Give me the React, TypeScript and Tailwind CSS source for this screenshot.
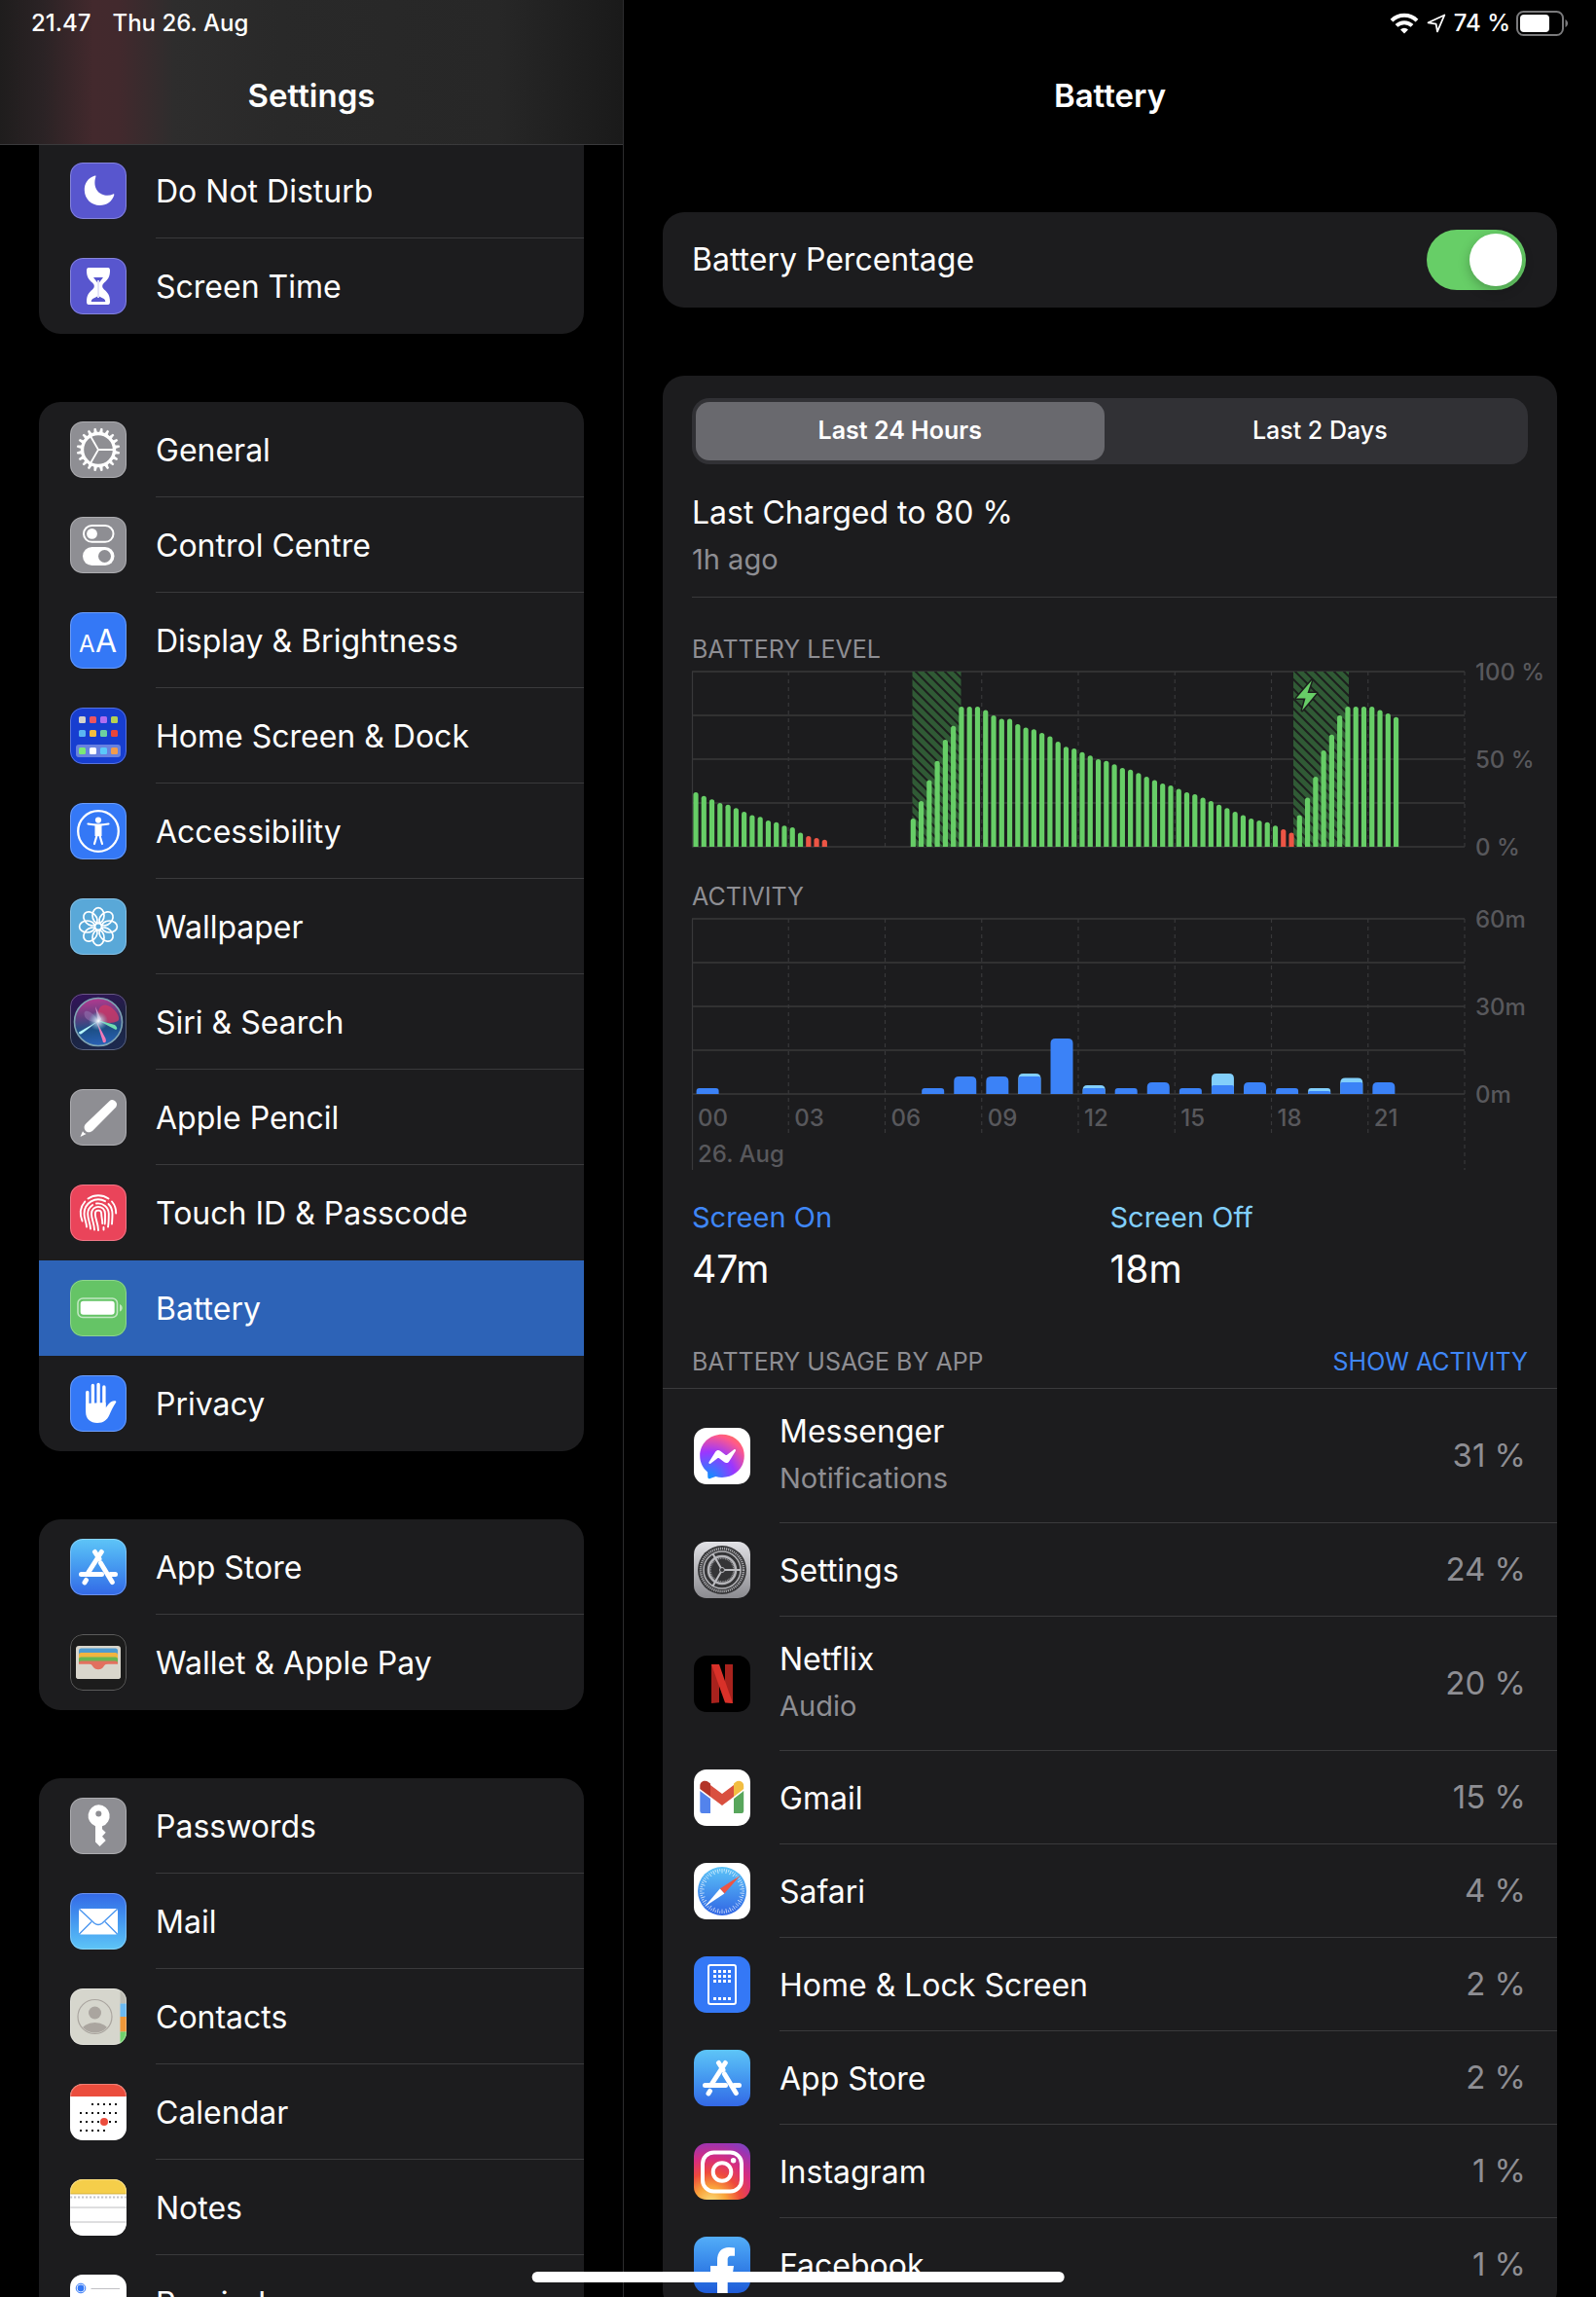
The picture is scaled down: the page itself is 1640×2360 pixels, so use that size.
import { useState, type ReactNode } from "react";

type IconName =
  | "moon"
  | "hourglass"
  | "gear"
  | "toggles"
  | "display"
  | "home"
  | "accessibility"
  | "wallpaper"
  | "siri"
  | "pencil"
  | "touch"
  | "battery"
  | "hand"
  | "appstore"
  | "wallet"
  | "key"
  | "mail"
  | "contacts"
  | "calendar"
  | "notes"
  | "reminders"
  | "messenger"
  | "settings"
  | "netflix"
  | "gmail"
  | "safari"
  | "lockscreen"
  | "instagram"
  | "facebook";

type NavItem = { label: string; icon: IconName };

const navGroups: NavItem[][] = [
  [
    { label: "Do Not Disturb", icon: "moon" },
    { label: "Screen Time", icon: "hourglass" },
  ],
  [
    { label: "General", icon: "gear" },
    { label: "Control Centre", icon: "toggles" },
    { label: "Display & Brightness", icon: "display" },
    { label: "Home Screen & Dock", icon: "home" },
    { label: "Accessibility", icon: "accessibility" },
    { label: "Wallpaper", icon: "wallpaper" },
    { label: "Siri & Search", icon: "siri" },
    { label: "Apple Pencil", icon: "pencil" },
    { label: "Touch ID & Passcode", icon: "touch" },
    { label: "Battery", icon: "battery" },
    { label: "Privacy", icon: "hand" },
  ],
  [
    { label: "App Store", icon: "appstore" },
    { label: "Wallet & Apple Pay", icon: "wallet" },
  ],
  [
    { label: "Passwords", icon: "key" },
    { label: "Mail", icon: "mail" },
    { label: "Contacts", icon: "contacts" },
    { label: "Calendar", icon: "calendar" },
    { label: "Notes", icon: "notes" },
    { label: "Reminders", icon: "reminders" },
  ],
];

const usage: { name: string; icon: IconName; percent: number; detail?: string }[] = [
  { name: "Messenger", icon: "messenger", percent: 31, detail: "Notifications" },
  { name: "Settings", icon: "settings", percent: 24 },
  { name: "Netflix", icon: "netflix", percent: 20, detail: "Audio" },
  { name: "Gmail", icon: "gmail", percent: 15 },
  { name: "Safari", icon: "safari", percent: 4 },
  { name: "Home & Lock Screen", icon: "lockscreen", percent: 2 },
  { name: "App Store", icon: "appstore", percent: 2 },
  { name: "Instagram", icon: "instagram", percent: 1 },
  { name: "Facebook", icon: "facebook", percent: 1 },
];

// one reading every 15 minutes, starting at midnight
const levels = [
  31, 29, 27, 25, 24, 22, 20, 18, 17, 15, 14, 12, 11, 8, 6, 5, 4, 0, 0, 0, 0, 0, 0, 0, 0, 0, 0,
  16, 26, 38, 49, 61, 69, 80, 80, 80, 78, 75, 73, 73, 70, 68, 67, 65, 63, 60, 57, 56, 54, 52, 50, 49, 47, 45,
  44, 42, 40, 38, 36, 35, 33, 31, 30, 28, 26, 24, 22, 20, 18, 16, 15, 14, 12, 10, 8,
  18, 28, 40, 55, 64, 75, 80, 80, 80, 80, 78, 76, 74,
];
const lowReadings = [14, 15, 16, 73, 74];

// minutes per hour: [hour, screen on, screen off]
const activity = [
  [0, 2, 0],
  [7, 2, 0],
  [8, 6, 0],
  [9, 6, 0],
  [10, 6, 1],
  [11, 19, 0],
  [12, 2, 1],
  [13, 2, 0],
  [14, 4, 0],
  [15, 2, 0],
  [16, 3, 4],
  [17, 4, 0],
  [18, 2, 0],
  [19, 1, 1],
  [20, 4, 1.5],
  [21, 4, 0],
];

const CHART_W = 794;
const STEP = CHART_W / 8;

export default function App() {
  const [selected, setSelected] = useState("Battery");

  return (
    <div className="relative flex h-screen overflow-hidden bg-black font-['Inter',sans-serif] text-white">
      <Sidebar selected={selected} onSelect={setSelected} />
      <BatteryPage />
      <div className="absolute bottom-[15px] left-1/2 h-[11px] w-1/3 -translate-x-1/2 rounded-full bg-white" />
    </div>
  );
}

function Sidebar({ selected, onSelect }: { selected: string; onSelect: (label: string) => void }) {
  return (
    <aside className="flex w-[641px] shrink-0 flex-col border-r border-[#2c2c2e]">
      <header className="relative z-10 h-[149px] shrink-0 border-b border-[#3a3a3c] bg-[linear-gradient(90deg,#1f1d1d_0%,#2b2325_7%,#43292d_15%,#42292d_19%,#2e2d2d_28%,#292929_45%,#272727_80%,#1a1a1a_100%)]">
        <div className="flex h-12 items-center gap-[22px] px-8 text-[24px] font-medium">
          <span>21.47</span>
          <span>Thu 26. Aug</span>
        </div>
        <h1 className="flex h-[101px] items-center justify-center text-[33px] font-semibold">Settings</h1>
      </header>
      <nav className="-mt-0.5 flex min-h-0 flex-1 flex-col gap-[70px] overflow-hidden px-10">
        {navGroups.map((group, index) => (
          <NavGroup key={group[0].label} items={group} first={index === 0} selected={selected} onSelect={onSelect} />
        ))}
      </nav>
    </aside>
  );
}

function NavGroup({ items, first, selected, onSelect }: { items: NavItem[]; first: boolean; selected: string; onSelect: (label: string) => void }) {
  return (
    <ul className={first ? "shrink-0 overflow-hidden rounded-b-[22px] bg-[#1c1c1e]" : "shrink-0 overflow-hidden rounded-[22px] bg-[#1c1c1e]"}>
      {items.map((item, index) => {
        const active = item.label === selected;
        const nextActive = items[index + 1]?.label === selected;
        const plain = active || nextActive || index === items.length - 1;
        return (
          <li key={item.label}>
            <a
              href="#"
              aria-current={active ? "page" : undefined}
              onClick={(event) => {
                event.preventDefault();
                onSelect(item.label);
              }}
              className={active ? "flex h-[98px] items-center gap-[30px] bg-[#2d63b7] pl-8" : "flex h-[98px] items-center gap-[30px] pl-8"}
            >
              <AppIcon name={item.icon} outlined />
              <span className={plain ? "flex h-full flex-1 items-center border-b border-transparent pt-0.5 text-[32px]" : "flex h-full flex-1 items-center border-b border-[#3a3a3c] pt-0.5 text-[32px]"}>
                {item.label}
              </span>
            </a>
          </li>
        );
      })}
    </ul>
  );
}

function BatteryPage() {
  const [range, setRange] = useState("Last 24 Hours");

  return (
    <main className="flex min-w-0 flex-1 flex-col overflow-hidden">
      <header className="h-[148px] shrink-0">
        <StatusIcons />
        <h2 className="flex h-[101px] items-center justify-center text-[33px] font-semibold">Battery</h2>
      </header>
      <div className="flex min-h-0 flex-1 flex-col gap-[70px] px-10 pt-[70px]">
        <label className="flex h-[98px] shrink-0 items-center justify-between rounded-[22px] bg-[#1c1c1e] pr-8 pl-[30px] text-[32px]">
          Battery Percentage
          <input
            type="checkbox"
            defaultChecked
            className="flex h-[62px] w-[102px] appearance-none rounded-full bg-[#39393d] p-1 before:block before:size-[54px] before:rounded-full before:bg-white before:shadow-[0_4px_12px_rgba(0,0,0,0.25)] checked:bg-[#67ce67] checked:before:ml-auto"
          />
        </label>

        <section className="shrink-0 rounded-[22px] bg-[#1c1c1e] pt-[23px]">
          <div className="mx-[30px] flex h-[68px] gap-3 rounded-[18px] bg-[#313135] p-1">
            {["Last 24 Hours", "Last 2 Days"].map((option) => (
              <button
                key={option}
                type="button"
                aria-pressed={option === range}
                onClick={() => setRange(option)}
                className={option === range ? "flex-1 rounded-[14px] bg-[#69696e] text-[25px] font-semibold" : "flex-1 rounded-[14px] text-[25px] font-medium"}
              >
                {option}
              </button>
            ))}
          </div>

          <div className="mt-[30px] ml-[30px] border-b border-[#3a3a3c] pb-5">
            <p className="text-[32px] leading-10">Last Charged to 80 %</p>
            <p className="mt-2.5 text-[29px] leading-9 text-[#8e8e93]">1h ago</p>
          </div>

          <div className="mt-[37px] pl-[30px]">
            <h3 className="mb-[7px] text-[25px] leading-8 text-[#8e8e93]">BATTERY LEVEL</h3>
            <LevelChart />
            <h3 className="mt-[35px] mb-[7px] text-[25px] leading-8 text-[#8e8e93]">ACTIVITY</h3>
            <ActivityChart />
          </div>

          <dl className="mt-[29px] grid grid-cols-2 px-[30px]">
            <div>
              <dt className="text-[29px] leading-9 text-[#3f87f8]">Screen On</dt>
              <dd className="mt-[13px] text-[39px] leading-11">47m</dd>
            </div>
            <div>
              <dt className="text-[29px] leading-9 text-[#82cffb]">Screen Off</dt>
              <dd className="mt-[13px] text-[39px] leading-11">18m</dd>
            </div>
          </dl>

          <div className="mt-[57px] flex items-center justify-between border-b border-[#3a3a3c] px-[30px] pb-[11px] text-[25px] leading-8">
            <h3 className="text-[#8e8e93]">BATTERY USAGE BY APP</h3>
            <button type="button" className="text-[#3f87f8]">SHOW ACTIVITY</button>
          </div>
          <ul>
            {usage.map((app) => (
              <li key={app.name} className="flex items-center gap-[30px] pl-8">
                <AppIcon name={app.icon} />
                <div className={app.detail ? "flex h-[138px] flex-1 items-center justify-between border-b border-[#3a3a3c] pr-8" : "flex h-24 flex-1 items-center justify-between border-b border-[#3a3a3c] pr-8"}>
                  <div className="pt-0.5">
                    <p className="text-[32px] leading-12">{app.name}</p>
                    {app.detail && <p className="pb-1 text-[29px] leading-12 text-[#8e8e93]">{app.detail}</p>}
                  </div>
                  <span className="text-[33px] text-[#8e8e93]">{app.percent} %</span>
                </div>
              </li>
            ))}
          </ul>
        </section>
      </div>
    </main>
  );
}

function StatusIcons() {
  return (
    <div className="flex h-12 items-center justify-end pr-7 text-[24px] font-medium">
      <svg width="30" height="22" viewBox="0 0 30 22" className="mr-2">
        <g fill="none" stroke="#fff" strokeWidth="4">
          <path d="M2 8.2a18.5 18.5 0 0 1 26 0" />
          <path d="M7 13.4a11.5 11.5 0 0 1 16 0" />
        </g>
        <path d="M15 21.5l-4-4.1a5.8 5.8 0 0 1 8 0z" fill="#fff" />
      </svg>
      <svg width="20" height="20" viewBox="0 0 20 20" className="mr-2">
        <path d="M18.3 1.5 11 18.3 9.6 10.6 1.6 9.3z" fill="none" stroke="#fff" strokeWidth="1.8" strokeLinejoin="round" />
      </svg>
      <span className="mr-1.5">74 %</span>
      <svg width="54" height="26" viewBox="0 0 54 26">
        <rect x="1" y="1" width="47" height="24" rx="6.5" fill="none" stroke="#7a7a7c" strokeWidth="2" />
        <rect x="4" y="4" width="30" height="18" rx="4" fill="#fff" />
        <path d="M50.5 9c3.4 1.4 3.4 6.6 0 8z" fill="#7a7a7c" />
      </svg>
    </div>
  );
}

function Grid({ drop, edgeDrop }: { drop: number; edgeDrop: number }) {
  return (
    <g stroke="#38383a">
      {[0, 45, 90, 135, 180].map((y) => (
        <line key={y} x1="0" x2={CHART_W} y1={y} y2={y} strokeWidth="1.4" />
      ))}
      <line x1="0.5" x2="0.5" y1="0" y2={edgeDrop} strokeWidth="1.2" />
      {[1, 2, 3, 4, 5, 6, 7, 8].map((col) => (
        <line key={col} x1={col * STEP} x2={col * STEP} y1="0" y2={col === 8 ? edgeDrop : drop} strokeWidth="1.2" strokeDasharray="4 4" />
      ))}
    </g>
  );
}

function LevelChart() {
  const pitch = CHART_W / 96;
  return (
    <svg viewBox="0 0 889 180" className="block w-full overflow-visible" role="img" aria-label="Battery level over the last 24 hours">
      <defs>
        <pattern id="hatch" width="10" height="10" patternUnits="userSpaceOnUse">
          <rect width="10" height="10" fill="#305a35" />
          <path d="M-2-2 12 12M-2 8 2 12M8-2 12 2" stroke="#1c1f1d" strokeWidth="2" />
        </pattern>
      </defs>
      <Grid drop={180} edgeDrop={180} />
      <rect x="226.5" y="0" width="50" height="180" fill="url(#hatch)" />
      <rect x="618" y="0" width="57" height="180" fill="url(#hatch)" />
      <path d="M637 9 621 27.5h9.5L627 40 642 22h-9.5z" fill="#67ce67" stroke="#1c1f1d" strokeWidth="3" paintOrder="stroke" strokeLinejoin="round" />
      {levels.map((level, index) => {
        if (!level) return null;
        const x = index * pitch + 1.4;
        const top = 180 - level * 1.8;
        return (
          <path
            key={index}
            d={`M${x} 180V${top + 2.5}a2.6 2.6 0 0 1 5.2 0V180z`}
            fill={lowReadings.includes(index) ? "#ec5545" : "#67ce67"}
          />
        );
      })}
      <g fill="#58585c" fontSize="24" fontWeight="500">
        <text x="805" y="9">100 %</text>
        <text x="805" y="99">50 %</text>
        <text x="805" y="189">0 %</text>
      </g>
    </svg>
  );
}

function ActivityChart() {
  const pitch = CHART_W / 24;
  return (
    <svg viewBox="0 0 889 260" className="block w-full overflow-visible" role="img" aria-label="Activity over the last 24 hours">
      <Grid drop={224} edgeDrop={258} />
      {activity.map(([hour, on, off]) => {
        const x = hour * pitch + 4.6;
        const top = 180 - (on + off) * 3;
        const r = Math.min(5, (on + off) * 1.5);
        return (
          <g key={hour}>
            <path d={`M${x} 180V${top + r}q0-${r} ${r}-${r}h${23 - 2 * r}q${r} 0 ${r} ${r}V180z`} fill={off ? "#82cffb" : "#3b82f7"} />
            {off > 0 && <path d={`M${x} 180V${180 - on * 3 + 2}q0-2 2-2h19q2 0 2 2V180z`} fill="#3b82f7" />}
          </g>
        );
      })}
      <g fill="#58585c" fontSize="24" fontWeight="500">
        <text x="805" y="9">60m</text>
        <text x="805" y="99">30m</text>
        <text x="805" y="189">0m</text>
        {["00", "03", "06", "09", "12", "15", "18", "21"].map((hour, index) => (
          <text key={hour} x={index * STEP + 6} y="213">{hour}</text>
        ))}
        <text x="6" y="250">26. Aug</text>
      </g>
    </svg>
  );
}

const tileColors: Record<IconName, string> = {
  moon: "bg-[#5856ce]",
  hourglass: "bg-[#5856ce]",
  gear: "bg-[#8e8e93]",
  toggles: "bg-[#8e8e93]",
  display: "bg-[#3478f6]",
  home: "bg-[#173ed0]",
  accessibility: "bg-[#3478f6]",
  wallpaper: "bg-[#59a8d8]",
  siri: "bg-[linear-gradient(160deg,#35125c,#1b2340_55%,#1d2a52)]",
  pencil: "bg-[#8e8e93]",
  touch: "bg-[#ea445a]",
  battery: "bg-[#65c466]",
  hand: "bg-[#3478f6]",
  appstore: "bg-linear-to-b from-[#5ec5f7] to-[#3468e6]",
  wallet: "bg-[#1c1c1c]",
  key: "bg-[#8e8e93]",
  mail: "bg-linear-to-b from-[#3468e6] to-[#5ec5f7]",
  contacts: "bg-[#d6d6cd]",
  calendar: "bg-white",
  notes: "bg-white",
  reminders: "bg-white",
  messenger: "bg-white",
  settings: "bg-linear-to-b from-[#e2e2e6] to-[#8b8b90]",
  netflix: "bg-black",
  gmail: "bg-white",
  safari: "bg-white",
  lockscreen: "bg-[#3478f6]",
  instagram: "bg-[radial-gradient(circle_at_30%_105%,#fbdf7c_0%,#f9a23a_22%,#ee4a3c_42%,#d82d7e_62%,#9a35b4_85%,#4c5fd0_110%)]",
  facebook: "bg-linear-to-b from-[#53adf8] to-[#1f5bd8]",
};

function AppIcon({ name, outlined = false }: { name: IconName; outlined?: boolean }) {
  return (
    <span className={`block size-[58px] shrink-0 overflow-hidden rounded-[13px] ${tileColors[name]}`}>
      <svg viewBox="0 0 58 58" className="size-full" aria-hidden="true">
        {glyphs[name]}
        {outlined && <rect x="0.5" y="0.5" width="57" height="57" rx="12.5" fill="none" stroke="#fff" strokeOpacity="0.28" />}
      </svg>
    </span>
  );
}

function spin(count: number, draw: (angle: number) => ReactNode) {
  return Array.from({ length: count }, (_, i) => draw((i * 360) / count));
}

const homeColors = ["#d4d4cc", "#ec5560", "#b06df0", "#b5d153", "#5ab6f2", "#f3bd3e", "#6ccfa0", "#e8453a", "#7be876", "#ffffff", "#5ac8fa", "#f29b4c"];

const glyphs: Record<IconName, ReactNode> = {
  moon: <path d="M25.5 13.5C18.5 15.5 14.5 21.500 14.800 28.500 15 37.500 22 44 30.500 44 37.500 44 43.300 40 45.300 33.200 45.500 32.400 44.800 32.200 44.200 32.500 34.500 36.800 21.800 29.500 26.400 14.400 26.700 13.600 26.300 13.200 25.500 13.500Z" fill="#fff" />,
  hourglass: (
    <>
      <path d="M19 10h20q2 0 2 3c0 7-2.5 9.5-6 12.5-2.5 2.2-2.5 4.8 0 7C38.5 35.5 41 38 41 45q0 3-2 3H19q-2 0-2-3c0-7 2.5-9.5 6-12.5 2.5-2.2 2.5-4.8 0-7C19.5 22.5 17 20 17 13q0-3 2-3z" fill="#fff" />
      <path d="M24 20h10l-4.2 5.5v14l5 2.5q1.5 1 1.5 3H21.7q0-2 1.5-3l5-2.5v-14z" fill="#5856ce" />
      <path d="M28.200 23h1.600v18h-1.600z" fill="#fff" />
    </>
  ),
  gear: (
    <g stroke="#fff" fill="none">
      <circle cx="29" cy="29" r="16.5" strokeWidth="3.4" />
      {spin(20, (angle) => (
        <path key={angle} d="M27.6 12 28.3 7.2h1.4L30.400 12z" fill="#fff" strokeWidth="0.8" transform={`rotate(${angle + 9} 29 29)`} />
      ))}
      <path d="M29 29h15M29 29l-7.5-13M29 29l-7.5 13" strokeWidth="1.8" />
    </g>
  ),
  toggles: (
    <>
      <rect x="14" y="9" width="30.5" height="16.8" rx="8.4" fill="none" stroke="#fff" strokeWidth="2" />
      <circle cx="22.5" cy="17.4" r="5.4" fill="#fff" />
      <rect x="13" y="31" width="32.5" height="19" rx="9.5" fill="#fff" />
      <circle cx="35.5" cy="40.5" r="6.5" fill="#8e8e93" />
    </>
  ),
  display: (
    <g fill="#fff" fontWeight="400">
      <text x="9" y="41" fontSize="24">A</text>
      <text x="26" y="41" fontSize="32">A</text>
    </g>
  ),
  home: (
    <>
      <rect x="6" y="38" width="46" height="13" rx="3" fill="#fff" fillOpacity="0.35" />
      {homeColors.map((color, i) => (
        <rect key={i} x={9 + (i % 4) * 11} y={[9, 23, 41][Math.floor(i / 4)]} width="7" height="7" rx="1.5" fill={color} />
      ))}
    </>
  ),
  accessibility: (
    <>
      <circle cx="29" cy="29" r="20.8" fill="none" stroke="#fff" strokeWidth="2.3" />
      <circle cx="29" cy="17.6" r="3.1" fill="#fff" />
      <path d="M18.5 21.5q10.5 2.2 21 0M27.8 32.5 25 42M30.2 32.5 33 42" fill="none" stroke="#fff" strokeWidth="2.2" strokeLinecap="round" />
      <path d="M25.5 22.3h7V34h-7z" fill="#fff" />
    </>
  ),
  wallpaper: (
    <g fill="none" stroke="#fff" strokeWidth="1.7">
      {spin(8, (angle) => (
        <ellipse key={angle} cx="29" cy="17.6" rx="6" ry="8" transform={`rotate(${angle} 29 29)`} />
      ))}
      <circle cx="29" cy="29" r="3.6" />
    </g>
  ),
  siri: (
    <>
      <defs>
        <linearGradient id="siri-orb" x1="0.4" y1="0" x2="0.5" y2="1">
          <stop offset="0" stopColor="#b53a90" />
          <stop offset="0.4" stopColor="#5b3f80" />
          <stop offset="0.65" stopColor="#1c4f86" />
          <stop offset="1" stopColor="#2a62b8" />
        </linearGradient>
        <radialGradient id="siri-core">
          <stop offset="0" stopColor="#fff" />
          <stop offset="0.4" stopColor="#c5e6f7" stopOpacity="0.6" />
          <stop offset="1" stopColor="#5cc9d8" stopOpacity="0" />
        </radialGradient>
      </defs>
      <circle cx="29" cy="29" r="24.5" fill="url(#siri-orb)" stroke="#7fa5b4" strokeWidth="1.6" />
      <path d="M29 29C24 17 12 14 15 23c2 5 8 6 14 6z" fill="#8d6aa8" fillOpacity="0.7" />
      <path d="M29 28C27 12 34 9 41 13c8 5 11 13 8 15-5 3-14 2-20 0z" fill="#cf3866" fillOpacity="0.8" />
      <path d="M29 28 9 39.5q0 3 3 1.500z" fill="#b6f6fa" />
      <path d="M28 27 47 37q3-1-1-5z" fill="#6fdcb0" />
      <path d="M27 28 34 50q4 1 2.500-4z" fill="#f07ab8" />
      <path d="M29 30 26 13l6 13z" fill="#e7a8d8" fillOpacity="0.8" />
      <circle cx="29" cy="28" r="10" fill="url(#siri-core)" />
    </>
  ),
  pencil: (
    <g fill="#fff">
      <path d="M40.5 12.2c3.5-3.5 10 2 6.7 6.2L23.5 42.5c-2.5 2.4-6.5 2.4-8-.3-1.7-2.6-1-5 1-7z" />
      <path d="M10.500 49 13 43.200q1 2.200 3.600 2.800z" />
    </g>
  ),
  touch: (
    <g fill="none" stroke="#fff" strokeWidth="1.9" strokeLinecap="round">
      <path d="M18.5 14.5a18.6 18.6 0 0 1 21 0" />
      <path d="M12.5 37.5C9.500 30 10.500 23 15.300 17.500M43 17.500c3 3.500 4.300 7.500 4.200 12" />
      <path d="M17 43.5c-.2-5-2.5-8-2.5-13.5a14.5 14.5 0 0 1 21.5-12.800M39.500 20c3 3 4 6.500 4 10.500 0 4.500-.3 7-.5 10" />
      <path d="M21 45.5c-.2-6-2.8-9.5-2.8-15.5 0-4 2-7 5-9M27 19.500c7-1 12.600 4 12.800 10.500 0 5.500 0 9-.8 13.500" />
      <path d="M25 46.5c-.2-7-3-10.5-3-16.5 0-9.5 14-9.5 14 0 0 5 .2 8-.3 10.500" />
      <path d="M29 47c-.2-8-3.2-11-3.2-17 0-4.500 6.400-4.500 6.400 0 0 4.500 1.200 6 1 10M34.500 44v2.500" />
    </g>
  ),
  battery: (
    <>
      <rect x="8" y="19" width="40.5" height="19.5" rx="5" fill="none" stroke="#fff" strokeOpacity="0.6" strokeWidth="1.6" />
      <rect x="10.7" y="21.7" width="35" height="14" rx="3" fill="#fff" />
      <path d="M51 25c3.600 1.300 3.600 6.300 0 7.500z" fill="#fff" fillOpacity="0.6" />
    </>
  ),
  hand: (
    <>
      <g stroke="#fff" strokeWidth="3.4" strokeLinecap="round">
        <path d="M17.8 17.500v17M23.400 10.500v22M29.100 9.500v22M34.900 12V34" />
      </g>
      <path d="M16.1 29v8.500C16.100 45 21 49 28 49c6.500 0 10-3 12.500-8.500 2-4.500 3.500-8 6.600-12.500.8-1.200-.3-1.800-1.500-1.700-4.600.4-6.300 4-9 7.200V28z" fill="#fff" />
    </>
  ),
  appstore: (
    <g stroke="#fff" strokeWidth="5" strokeLinecap="round">
      <path d="M32.3 13.5 18.8 34.5M25.500 13.500l4.500 7M31.500 25 43.300 44.500M16.500 42.500 15 44.800" />
      <path d="M11.5 36.5h21M41.500 36.500h5" />
    </g>
  ),
  wallet: (
    <>
      <rect x="6" y="12" width="46" height="34" rx="3" fill="#d9d6cc" />
      <path d="M9 17q0-2.500 2.500-2.500h35Q49 14.500 49 17v6H9z" fill="#4f9bd0" />
      <path d="M9 21q0-2 2.500-2h35q2.500 0 2.500 2v6H9z" fill="#f2b440" />
      <path d="M9 25.500q0-2 2.500-2h35q2.500 0 2.500 2v5H9z" fill="#68b752" />
      <path d="M9 29.500q0-2 2.500-2h35q2.500 0 2.500 2V31H9z" fill="#e2705f" />
      <path d="M6 30.500h13c3 0 3.500 1.500 5 3.500 2.500 3 7.500 3 10 0 1.500-2 2-3.500 5-3.500h13V43q0 3-3 3H9q-3 0-3-3z" fill="#d9d6cc" />
      <path d="M9 29.500h40v1H39c-3 0-3.500 1.500-5 3.500-2.500 3-7.500 3-10 0-1.500-2-2-3.500-5-3.500H9z" fill="#e2705f" />
    </>
  ),
  key: (
    <>
      <path d="M29.300 7.300a11.300 11.300 0 0 1 3.700 22v3l3.700 3.500-3.700 4 3.700 4.200L30.500 50 26 45.500V29.200a11.300 11.300 0 0 1 3.300-21.900z" fill="#fff" />
      <circle cx="29.3" cy="16.5" r="3" fill="#8e8e93" />
    </>
  ),
  mail: (
    <>
      <rect x="9" y="16" width="40" height="26.5" rx="2" fill="#fff" />
      <path d="M9.5 16.5 25 31q4 3 8 0L48.500 16.500M9.500 42 22 29.500M48.500 42 36 29.500" fill="none" stroke="#4a96f0" strokeWidth="1.4" />
    </>
  ),
  contacts: (
    <>
      <path d="M51.5 0H58v15.500h-6.500z" fill="#bdbdb5" />
      <path d="M51.5 15.500H58V29h-6.500z" fill="#6cbaf2" />
      <path d="M51.5 29H58v15.500h-6.500z" fill="#f0983a" />
      <path d="M51.5 44.500H58V58h-6.500z" fill="#6fd06c" />
      <clipPath id="contact-ring">
        <circle cx="25.5" cy="29" r="16.5" />
      </clipPath>
      <g fill="#aaa59f" clipPath="url(#contact-ring)">
        <circle cx="25.5" cy="25" r="6.5" />
        <ellipse cx="25.5" cy="44" rx="14" ry="9" />
      </g>
      <circle cx="25.5" cy="29" r="17.5" fill="none" stroke="#aaa59f" strokeWidth="1.2" />
    </>
  ),
  calendar: (
    <>
      <path d="M0 0h58v13H0z" fill="#eb4d3d" />
      <g fill="#111">
        {[0, 1, 2, 3].flatMap((row) =>
          [0, 1, 2, 3, 4, 5, 6].map((col) =>
            (row === 0 && col < 2) || (row === 3 && col > 4) ? null : (
              <rect key={`${row}-${col}`} x={10 + col * 6} y={20 + row * 9} width="2" height="2" />
            ),
          ),
        )}
      </g>
      <circle cx="35" cy="39" r="4" fill="#eb4d3d" />
    </>
  ),
  notes: (
    <>
      <path d="M0 0h58v15H0z" fill="#f5ce4a" />
      <path d="M0 15h58" stroke="#c9a83a" strokeWidth="0.8" />
      <path d="M0 18.500h58" stroke="#c4c4c8" strokeWidth="1.8" strokeDasharray="2.2 1.8" />
      <path d="M0 29h58M0 44h58" stroke="#bdbdc0" strokeWidth="1" />
    </>
  ),
  reminders: (
    <>
      <circle cx="11" cy="14" r="4.8" fill="none" stroke="#3478f6" strokeWidth="1" />
      <circle cx="11" cy="14" r="3.4" fill="#3478f6" />
      <path d="M21.500 14.500H51" stroke="#c0c0c4" strokeWidth="1" />
    </>
  ),
  messenger: (
    <>
      <defs>
        <radialGradient id="messenger-bubble" cx="0.2" cy="1" r="1.1">
          <stop offset="0" stopColor="#0a94ff" />
          <stop offset="0.55" stopColor="#9b36ff" />
          <stop offset="0.9" stopColor="#ff5a8a" />
          <stop offset="1" stopColor="#ff6968" />
        </radialGradient>
      </defs>
      <path d="M29 6.700c13 0 22.800 9.500 22.800 22.100S42 51 29 51c-2.300 0-4.500-.3-6.600-.9l-5.500 2c-1.500.6-2.600-.3-2.600-1.600l-.2-5C9.300 41.500 6.200 35.700 6.200 28.800 6.200 16.200 16 6.700 29 6.700z" fill="url(#messenger-bubble)" />
      <path d="M15.500 35.300 22.200 24.600c1-1.700 3.300-2.100 4.900-.9l5.300 4c.5.400 1.200.4 1.700 0l7.200-5.500c1-.7 2.200.4 1.600 1.500L36.200 34.400c-1 1.700-3.300 2.100-4.900.9l-5.300-4c-.5-.4-1.200-.4-1.700 0l-7.200 5.500c-1 .7-2.200-.4-1.600-1.500z" fill="#fff" />
    </>
  ),
  settings: (
    <g fill="none">
      <circle cx="29" cy="29" r="25" fill="#353537" />
      <circle cx="29" cy="29" r="22" stroke="#a5a5a9" strokeWidth="2.6" strokeDasharray="1.2 0.9" />
      <circle cx="29" cy="29" r="19" stroke="#b4b4b8" strokeWidth="1.5" />
      <circle cx="29" cy="29" r="14" stroke="#b4b4b8" strokeWidth="2.6" />
      <circle cx="29" cy="29" r="12" stroke="#8f8f93" strokeWidth="1.6" strokeDasharray="1 0.8" />
      <path d="M29 29h19M29 29l-9.500-16.500M29 29l-9.500 16.500" stroke="#bcbcc0" strokeWidth="2" />
      <circle cx="29" cy="29" r="2.5" fill="#353537" stroke="#bcbcc0" />
    </g>
  ),
  netflix: (
    <>
      <path d="M18 9h8v39.200L18 49zM32 9h8v40l-8-.8z" fill="#a8221d" />
      <path d="M18 9h8l14 40-8-.8z" fill="#d93129" />
    </>
  ),
  gmail: (
    <>
      <path d="M6.300 22 17 30v15H8.500q-2.200 0-2.200-2.200z" fill="#5383ec" />
      <path d="M51.2 22 41 30v15h8q2.200 0 2.200-2.200z" fill="#58a65c" />
      <path d="M17 16 29 25l12-9v12L29 37 17 28z" fill="#d95040" />
      <path d="M6.300 17c0-5 5.500-6.500 8.700-4l2 1.500V28L6.300 20z" fill="#b33428" />
      <path d="M51.200 17c0-5-5.200-6.500-8.400-4L41 14.500V28l10.200-8z" fill="#f2bd42" />
    </>
  ),
  safari: (
    <>
      <defs>
        <linearGradient id="safari-dial" x1="0" y1="0" x2="0" y2="1">
          <stop offset="0" stopColor="#5cc4f8" />
          <stop offset="1" stopColor="#3065e4" />
        </linearGradient>
      </defs>
      <circle cx="29" cy="29" r="25" fill="url(#safari-dial)" />
      {spin(60, (angle) => (
        <path key={angle} d={angle % 12 ? "M29 6v2.500" : "M29 6v4.500"} stroke="#fff" strokeOpacity="0.8" strokeWidth="0.8" transform={`rotate(${angle} 29 29)`} />
      ))}
      <path d="M47.500 13 26.800 26.500l4.600 5z" fill="#ec5545" />
      <path d="M11 45 26.800 26.500l4.600 5z" fill="#fff" />
    </>
  ),
  lockscreen: (
    <>
      <rect x="15" y="9" width="28" height="40" rx="2" fill="none" stroke="#fff" strokeWidth="2" />
      {[14, 19, 24, 42].map((y) => [20, 25, 30, 35].map((x) => <rect key={`${x}-${y}`} x={x} y={y} width="3" height="3" fill="#fff" />))}
    </>
  ),
  instagram: (
    <>
      <rect x="9" y="9.5" width="40" height="40" rx="11.5" fill="none" stroke="#fff" strokeWidth="4" />
      <circle cx="29" cy="29.5" r="9.3" fill="none" stroke="#fff" strokeWidth="4" />
      <circle cx="40.6" cy="17.8" r="2.7" fill="#fff" />
    </>
  ),
  facebook: <path d="M24 58V39.500h-7V30h7v-5.500C24 16 28.500 11 36 11q3.500 0 6 .6v8.200h-3.500c-3 0-3.800 1.700-3.800 4.200v6H41l-1.300 9.500h-5V58z" fill="#fff" />,
};
